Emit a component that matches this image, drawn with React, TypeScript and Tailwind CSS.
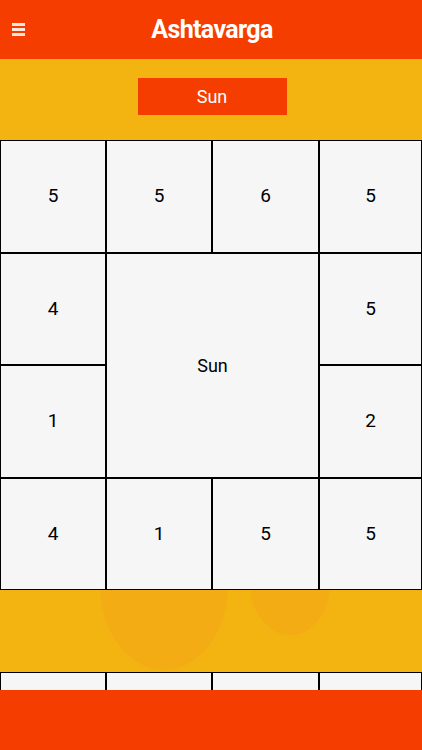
import React from "react";

const top = ["5", "5", "6", "5"];
const bottom = ["4", "1", "5", "5"];

function Cell({ children }: { children?: React.ReactNode }) {
  return (
    <div className="bg-[#f6f6f6] flex items-center justify-center text-[19px] text-black">
      {children}
    </div>
  );
}

export default function App() {
  return (
    <div className="w-[422px] h-[750px] flex flex-col overflow-hidden font-['Roboto',sans-serif]">
      {/* Header */}
      <div className="h-[59px] shrink-0 bg-[#f53d00] relative flex items-center justify-center">
        <button className="absolute left-[12px] top-[23px] flex flex-col gap-[2.5px]">
          <span className="block w-[13px] h-[2.5px] bg-[#fde6dc]" />
          <span className="block w-[13px] h-[2.5px] bg-[#fde6dc]" />
          <span className="block w-[13px] h-[2.5px] bg-[#fde6dc]" />
        </button>
        <h1 className="text-white text-[25px] font-bold tracking-tight pl-[2px]">Ashtavarga</h1>
      </div>

      {/* Planet selector */}
      <div className="h-[81px] shrink-0 bg-[#f3b412] relative flex items-start justify-center pt-[19px] overflow-hidden">
        <div className="absolute left-[198px] top-[92px] w-[58px] h-[90px] rounded-[50%] bg-[#f5a716] opacity-50" />
        <button className="relative w-[149px] h-[37px] bg-[#f53d00] text-white text-[18px] ml-[2px]">Sun</button>
      </div>

      {/* Chart */}
      <div className="h-[450px] shrink-0 bg-black p-[1px] grid grid-cols-[104px_104px_105px_1fr] grid-rows-4 gap-[2px]">
        {top.map((n, i) => (
          <Cell key={"t" + i}>{n}</Cell>
        ))}
        <Cell>4</Cell>
        <div className="col-span-2 row-span-2 bg-[#f6f6f6] flex items-center justify-center text-[18px] text-black">
          Sun
        </div>
        <Cell>5</Cell>
        <Cell>1</Cell>
        <Cell>2</Cell>
        {bottom.map((n, i) => (
          <Cell key={"b" + i}>{n}</Cell>
        ))}
      </div>

      {/* Gap band */}
      <div className="h-[82px] shrink-0 bg-[#f3b412] relative overflow-hidden">
        <div className="absolute left-[100px] top-[-90px] w-[128px] h-[170px] rounded-[50%] bg-[#f5a716] opacity-60" />
        <div className="absolute left-[250px] top-[-55px] w-[80px] h-[100px] rounded-[50%] bg-[#f5a716] opacity-60" />
      </div>

      {/* Next chart peeking */}
      <div className="h-[18px] shrink-0 bg-black pt-[1px] px-[1px] grid grid-cols-[104px_104px_105px_1fr] gap-x-[2px]">
        <div className="bg-[#f6f6f6]" />
        <div className="bg-[#f6f6f6]" />
        <div className="bg-[#f6f6f6]" />
        <div className="bg-[#f6f6f6]" />
      </div>

      {/* Bottom bar */}
      <div className="h-[60px] shrink-0 bg-[#f53d00]" />
    </div>
  );
}
